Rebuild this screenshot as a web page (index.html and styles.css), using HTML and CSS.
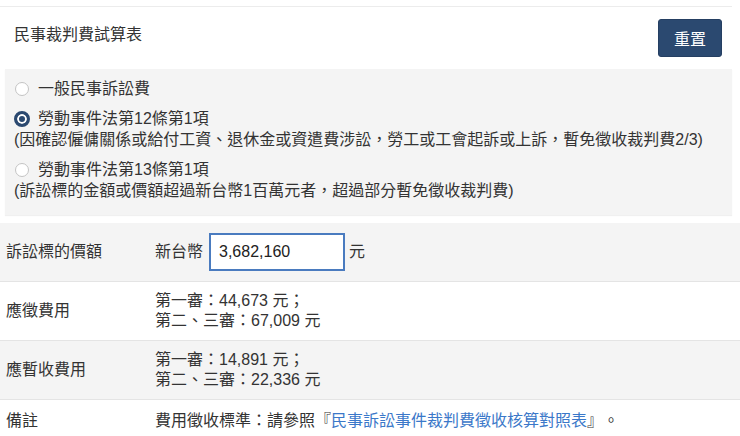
FILE: index.html
```html
<!DOCTYPE html>
<html lang="zh-Hant-TW">
<head>
<meta charset="utf-8">
<title>民事裁判費試算表</title>
<link rel="stylesheet" href="styles.css">
</head>
<body>
<div class="card">
  <div class="card-head">
    <div class="title">民事裁判費試算表</div>
    <button class="btn">重置</button>
  </div>
  <div class="options">
    <div class="opt">
      <div class="opt-line"><span class="radio"></span><span>一般民事訴訟費</span></div>
    </div>
    <div class="opt">
      <div class="opt-line"><span class="radio checked"></span><span>勞動事件法第12條第1項</span></div>
      <div class="opt-note">(因確認僱傭關係或給付工資、退休金或資遣費涉訟，勞工或工會起訴或上訴，暫免徵收裁判費2/3)</div>
    </div>
    <div class="opt">
      <div class="opt-line"><span class="radio"></span><span>勞動事件法第13條第1項</span></div>
      <div class="opt-note">(訴訟標的金額或價額超過新台幣1百萬元者，超過部分暫免徵收裁判費)</div>
    </div>
  </div>
</div>
<div class="table">
  <div class="row alt r-input">
    <div class="label">訴訟標的價額</div>
    <div class="value inline"><span>新台幣</span><span class="input">3,682,160</span><span>元</span></div>
  </div>
  <div class="row r-two">
    <div class="label">應徵費用</div>
    <div class="value"><div>第一審：44,673 元；</div><div>第二、三審：67,009 元</div></div>
  </div>
  <div class="row alt r-two">
    <div class="label">應暫收費用</div>
    <div class="value"><div>第一審：14,891 元；</div><div>第二、三審：22,336 元</div></div>
  </div>
  <div class="row r-note">
    <div class="label">備註</div>
    <div class="value"><span>費用徵收標準：請參照『<a class="link" href="#">民事訴訟事件裁判費徵收核算對照表</a>』。</span></div>
  </div>
</div>
</body>
</html>
```
FILE: styles.css
```css
* { box-sizing: border-box; }
html, body { margin: 0; padding: 0; background: #fff; }
body {
  width: 740px;
  font-family: "Liberation Sans", "Noto Sans CJK TC", Arial, sans-serif;
  font-size: 16px;
  color: #333;
  text-spacing-trim: space-all;
}
.card {
  margin-top: 6px;
  width: 732px;
  border-top: 1px solid #ececec;
}
.card-head {
  height: 62px;
  display: flex;
  align-items: center;
  justify-content: space-between;
  padding: 0 10px 0 14px;
}
.title { line-height: 20px; margin-top: -7px; }
.btn {
  width: 64px;
  height: 38px;
  background: #2b4970;
  color: #fff;
  border: 1px solid #253f62;
  border-radius: 3px;
  font-family: inherit;
  font-size: 16px;
  padding: 0;
}
.options {
  margin-left: 5px;
  background: #f4f4f4;
  padding: 9px 9px 15px 9px;
  box-shadow: 0 1px 1px rgba(0,0,0,0.06);
  height: 146px;
}
.opt { margin-bottom: 9px; line-height: 21px; }
.opt:last-child { margin-bottom: 0; }
.opt-line { display: flex; align-items: center; gap: 10px; }
.radio {
  width: 14px;
  height: 14px;
  border-radius: 50%;
  border: 1px solid #c4c4c4;
  background: #fff;
  margin-left: 1px;
  margin-right: -1px;
  flex: none;
}
.radio.checked {
  width: 16px;
  height: 16px;
  margin-left: 0;
  margin-right: -2px;
  border: 3px solid #2b4970;
  background: #2b4970;
  box-shadow: inset 0 0 0 2px #fff;
}
.opt-note { white-space: nowrap; }
.table { margin-top: 8px; }
.row {
  display: flex;
  align-items: center;
  border-bottom: 1px solid #e4e4e4;
}
.row.alt { background: #f4f4f4; }
.label { width: 155px; flex: none; padding-left: 6px; line-height: 20px; }
.value { flex: 1 1 auto; min-width: 0; line-height: 20px; }
.r-input { height: 59px; }
.r-two { height: 59px; }
.r-note { padding: 11px 0; border-bottom: none; }
.inline { display: flex; align-items: center; }
.input {
  display: inline-block;
  width: 136px;
  height: 38px;
  margin: 0 4px 0 6px;
  border: 2px solid #4a7bbf;
  background: #fff;
  color: #222;
  padding: 0 8px;
  line-height: 34px;
}
.link { color: #3b78c9; text-decoration: none; }
```
